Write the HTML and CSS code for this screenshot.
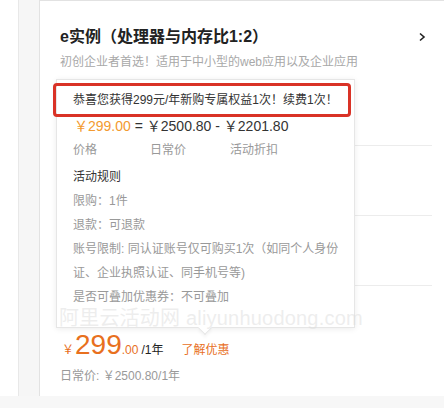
FILE: index.html
```html
<!DOCTYPE html>
<html lang="zh-CN">
<head>
<meta charset="utf-8">
<title>e实例</title>
<link rel="stylesheet" href="styles.css">
</head>
<body>
<div class="page">
  <div class="side"></div>
  <div class="gutter"></div>
  <div class="card">
    <div class="head">
      <h2 class="title">e实例（处理器与内存比1:2）</h2>
      <svg class="chev" width="8" height="10" viewBox="0 0 8 10"><path d="M2 1.5 L6 5 L2 8.5" fill="none" stroke="#222" stroke-width="1.6"/></svg>
    </div>
    <p class="sub">初创企业者首选！适用于中小型的web应用以及企业应用</p>
    <div class="rows">
      <div class="row"></div>
      <div class="row"></div>
      <div class="row"></div>
    </div>
    <div class="price">
      <span class="yen">￥</span><span class="big">299</span><span class="dec">.00</span><span class="per">/1年</span><span class="learn">了解优惠</span>
    </div>
    <p class="daily">日常价: ￥2500.80/1年</p>

    <div class="pop">
      <p class="notice">恭喜您获得299元/年新购专属权益1次！续费1次！</p>
      <p class="eq"><span class="orange">￥299.00</span> = ￥2500.80 - ￥2201.80</p>
      <div class="labels"><span>价格</span><span>日常价</span><span>活动折扣</span></div>
      <p class="rules-title">活动规则</p>
      <p class="rule">限购：1件</p>
      <p class="rule">退款：可退款</p>
      <p class="rule">账号限制: 同认证账号仅可购买1次（如同个人身份<br>证、企业执照认证、同手机号等)</p>
      <p class="rule">是否可叠加优惠券：不可叠加</p>
      <span class="arrow"></span>
    </div>
    <div class="mark"></div>
    <div class="watermark">阿里云活动网 aliyunhuodong.com</div>
  </div>
</div>
</body>
</html>
```
FILE: styles.css
```css
* { box-sizing: border-box; }
html, body { margin: 0; padding: 0; }
body {
  width: 444px;
  height: 408px;
  overflow: hidden;
  background: #f7f7f7;
  font-family: "Liberation Sans", "Noto Sans CJK SC", sans-serif;
  color: #333;
}
p { margin: 0; }
.page {
  display: flex;
  height: 396px;
}
.side {
  width: 19px;
  flex: none;
  background: #fff;
  border-right: 1px solid #e8e8e8;
}
.gutter {
  width: 20px;
  flex: none;
  background: #f6f6f6;
}
.card {
  position: relative;
  flex: none;
  width: 420px;
  background: #fff;
  border-top: 1px solid #e2e2e2;
  border-left: 1px solid #e2e2e2;
  padding: 23px 0 0 20px;
}
.head {
  display: flex;
  align-items: center;
  justify-content: space-between;
  padding-right: 33px;
  height: 26px;
}
.title {
  margin: 0;
  font-size: 16px;
  font-weight: bold;
  color: #222;
  line-height: 26px;
}
.chev { display: block; }
.sub {
  margin-top: 3px;
  font-size: 12px;
  line-height: 18px;
  color: #a8a8a8;
}
.rows {
  margin-top: 5px;
  margin-right: 27px;
}
.row {
  height: 70px;
  border-bottom: 1px solid #ececec;
}
.price {
  margin-top: 43px;
  display: flex;
  align-items: baseline;
  line-height: 32px;
  color: #e8701e;
}
.yen { font-size: 12px; margin-left: 2px; }
.big { font-size: 28px; margin-left: 1px; }
.dec { font-size: 12px; }
.per { font-size: 12px; color: #222; margin-left: 3px; }
.learn { font-size: 12px; margin-left: 18px; }
.daily {
  margin-top: 1px;
  font-size: 12px;
  line-height: 18px;
  color: #999;
}
.pop {
  position: absolute;
  left: 16px;
  top: 78px;
  width: 299px;
  height: 249px;
  background: #fff;
  border: 1px solid #e6e6e6;
  box-shadow: 0 1px 6px rgba(0, 0, 0, 0.08);
  padding: 8px 0 0 16px;
  font-size: 12px;
  line-height: 24px;
  color: #999;
}
.notice { color: #333; }
.eq {
  margin-top: 2px;
  font-size: 14px;
  color: #333;
  padding-left: 1px;
}
.orange { color: #f39a30; }
.labels {
  display: grid;
  grid-template-columns: 77px 80px auto;
}
.rules-title { margin-top: 3px; color: #333; }
.arrow {
  position: absolute;
  left: 143px;
  bottom: -6px;
  width: 10px;
  height: 10px;
  background: #fff;
  border-right: 1px solid #e6e6e6;
  border-bottom: 1px solid #e6e6e6;
  transform: rotate(45deg);
  box-shadow: 2px 2px 3px rgba(0, 0, 0, 0.04);
}
.mark {
  position: absolute;
  left: 13px;
  top: 82px;
  width: 298px;
  height: 34px;
  border: 3px solid #d93226;
  border-radius: 4px;
}
.watermark {
  position: absolute;
  left: 19px;
  top: 304px;
  font-size: 20px;
  line-height: 26px;
  color: rgba(220, 220, 220, 0.5);
  white-space: nowrap;
  letter-spacing: 0.2px;
}
```
